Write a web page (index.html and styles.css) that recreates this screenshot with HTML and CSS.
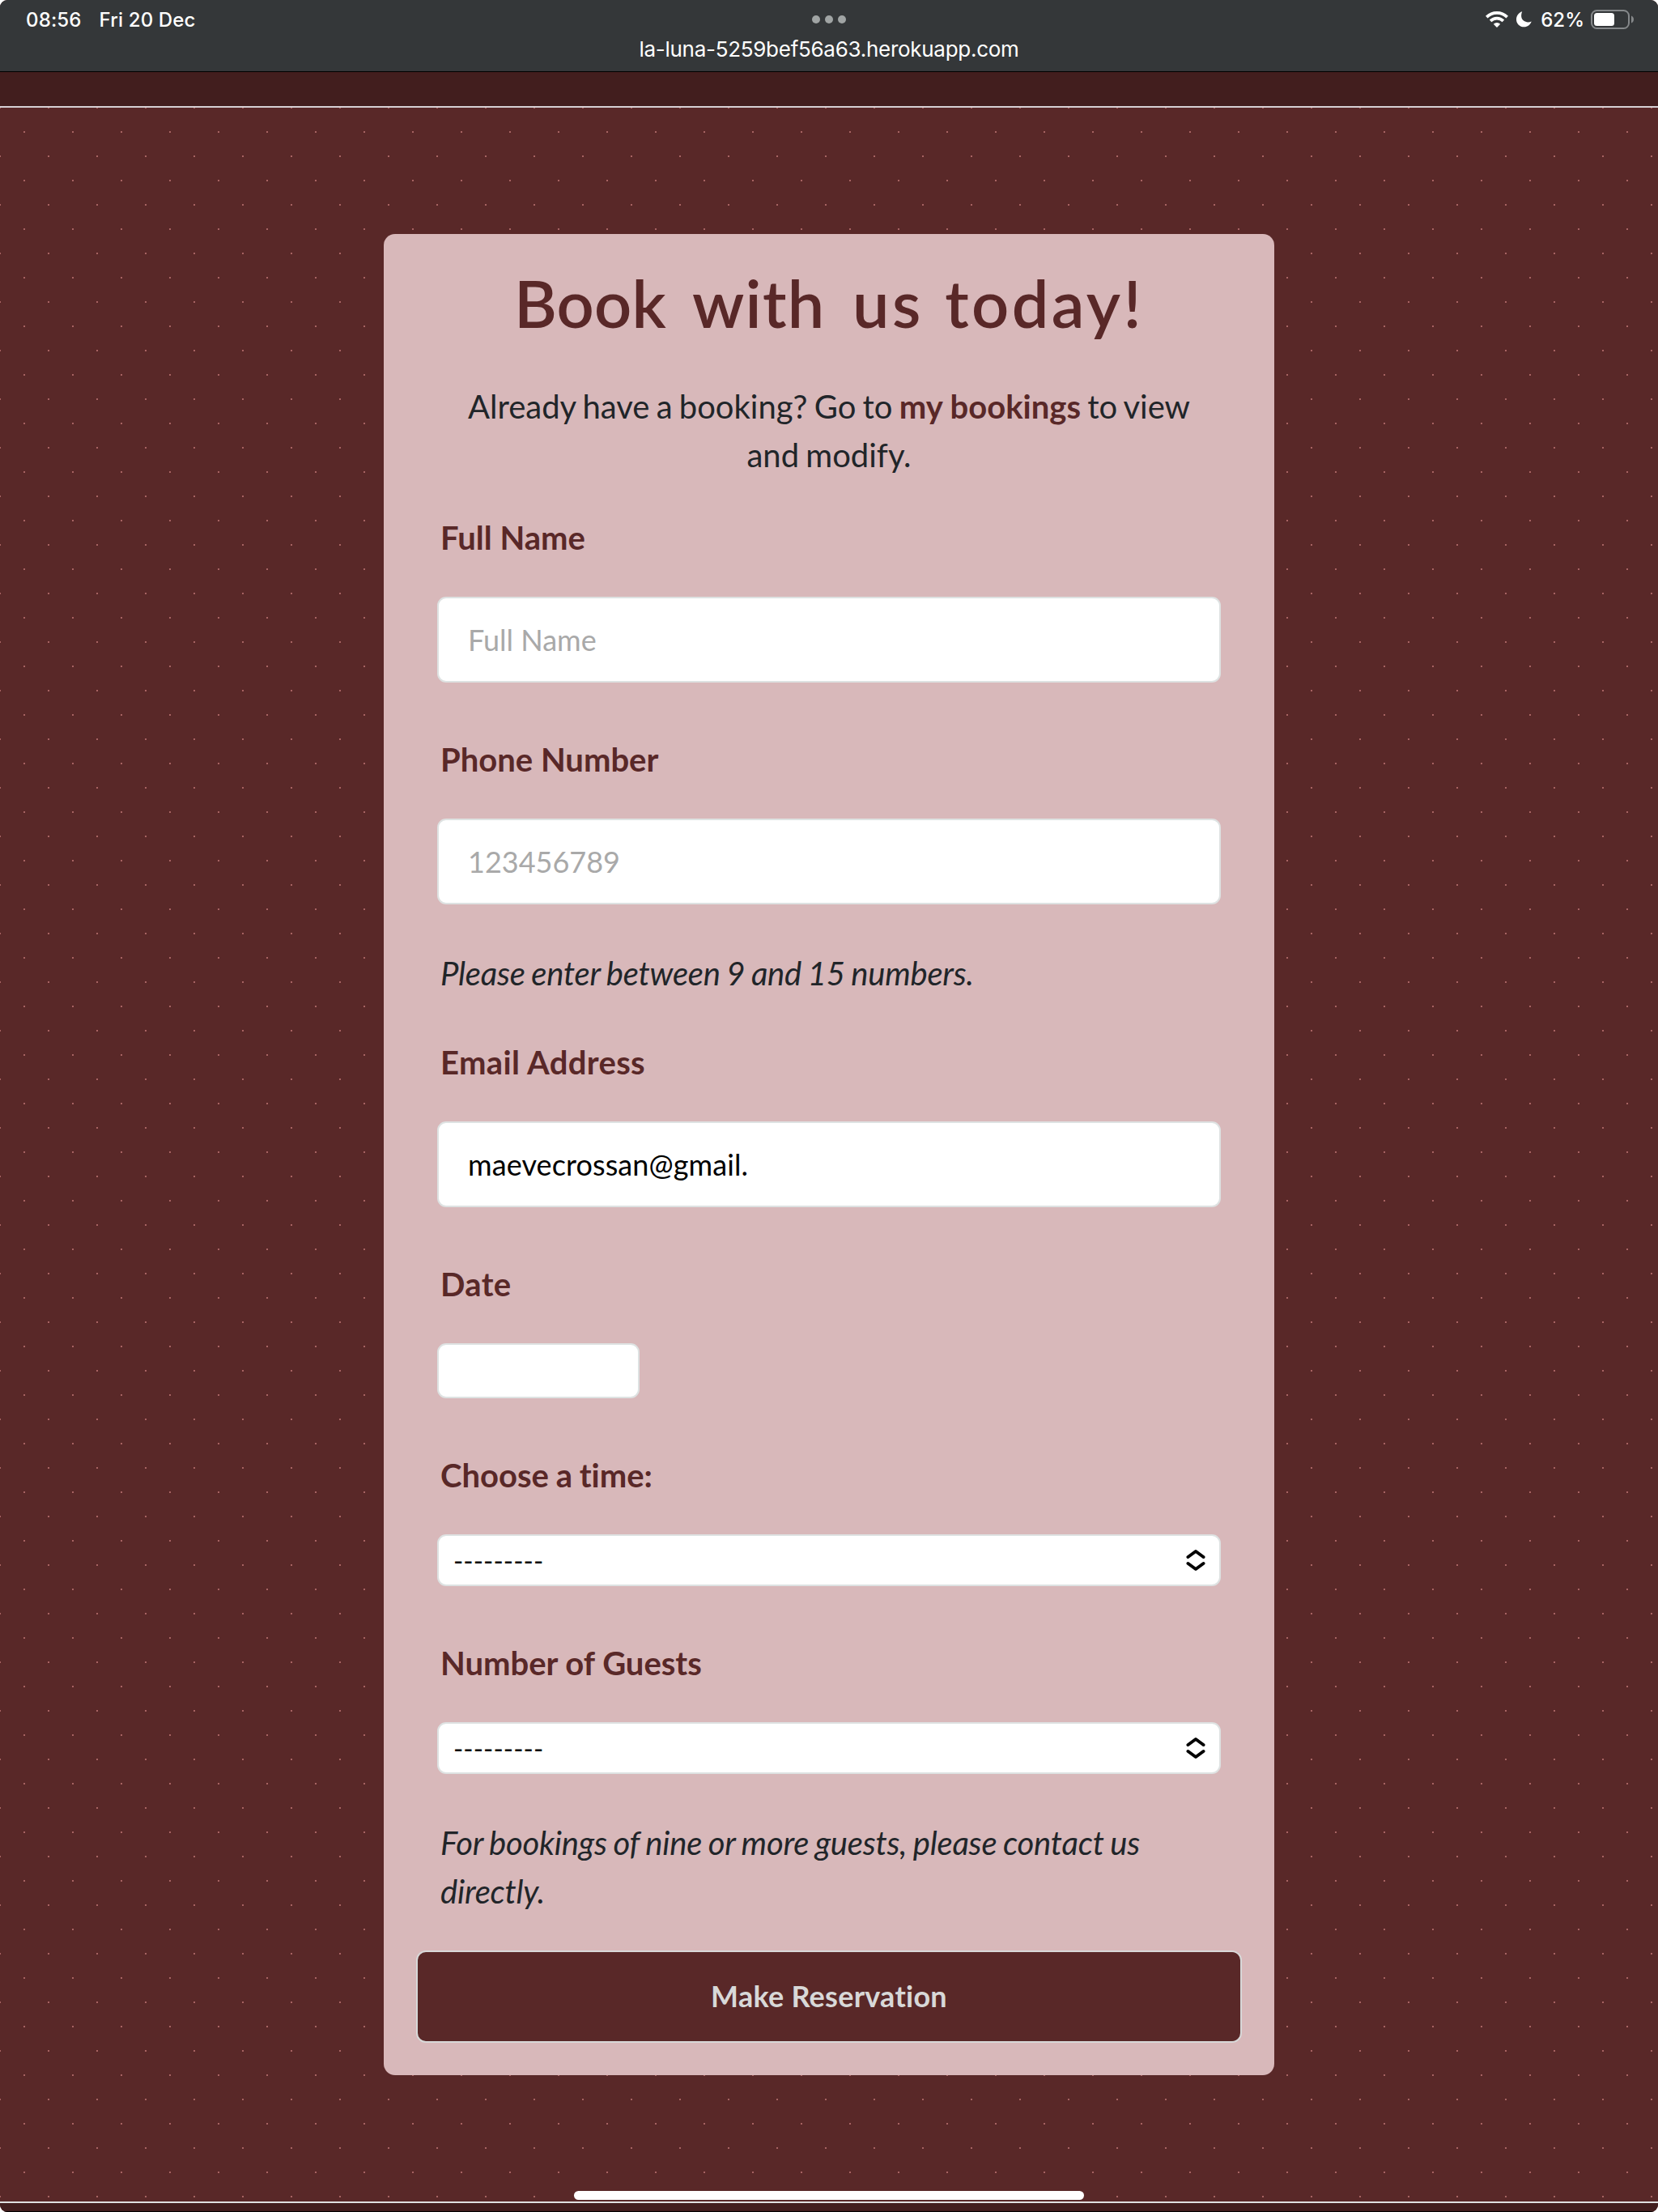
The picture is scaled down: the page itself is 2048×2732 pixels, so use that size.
FILE: index.html
```html
<!DOCTYPE html>
<html lang="en">
<head>
<meta charset="utf-8">
<title>La Luna - Book</title>
<link rel="stylesheet" href="styles.css">
</head>
<body>
<div class="screen">
  <header class="status">
    <div class="status-row">
      <div class="status-left"><span class="time">08:56</span><span class="day">Fri 20 Dec</span></div>
      <div class="dots"><i></i><i></i><i></i></div>
      <div class="status-right">
        <svg class="wifi" width="28" height="20" viewBox="0 0 28 20"><g fill="none" stroke="#fff" stroke-width="3.6"><path d="M1.3 7.1a18 18 0 0 1 25.4 0"/><path d="M6.1 11.9a11.2 11.2 0 0 1 15.8 0"/></g><path fill="#fff" d="M14 20l-4.2-4.3a6 6 0 0 1 8.4 0z"/></svg>
        <svg class="moon" width="19" height="20" viewBox="0 0 19 20"><path fill="#fff" d="M7.2.3C5.3 5 6 9.200 9 11.600c2.700 2.100 6.200 2.300 9.700.9C17.300 16.600 13.700 19.300 9.600 19.300 4.300 19.300 0 15.200 0 9.900 0 5.500 2.900 1.600 7.200.3z"/></svg>
        <span class="percent">62%</span>
        <svg class="battery" width="54" height="24" viewBox="0 0 54 24"><rect x="1" y="1" width="46" height="22" rx="6.500" fill="none" stroke="#85888a" stroke-width="2"/><rect x="4" y="4" width="25" height="16" rx="3.500" fill="#fff"/><path d="M50 7.500c4 1.500 4 7.500 0 9z" fill="#85888a"/></svg>
      </div>
    </div>
    <div class="url"><span>la-luna-5259bef56a63.herokuapp.com</span></div>
  </header>
  <div class="navbar"></div>
  <main class="page">
    <form class="card">
      <h1 class="title"><span class="narrow">Book</span> with <span class="wide">us today!</span></h1>
      <p class="intro">Already have a booking? Go to <a class="link">my bookings</a> to view<br>and modify.</p>
      <div class="field">
        <label class="label" for="name">Full Name</label>
        <input class="input" id="name" type="text" placeholder="Full Name">
      </div>
      <div class="field">
        <label class="label" for="phone">Phone Number</label>
        <input class="input" id="phone" type="text" placeholder="123456789">
        <p class="hint">Please enter between 9 and 15 numbers.</p>
      </div>
      <div class="field after-hint">
        <label class="label loose" for="email">Email Address</label>
        <input class="input email" id="email" type="text" value="maevecrossan@gmail.">
      </div>
      <div class="field">
        <label class="label loose" for="date">Date</label>
        <input class="input date" id="date" type="text">
      </div>
      <div class="field">
        <label class="label tight">Choose a time:</label>
        <div class="select"><span>---------</span>
          <svg width="24" height="28" viewBox="0 0 24 28"><g fill="none" stroke="#000" stroke-width="4" stroke-linecap="round" stroke-linejoin="round"><path d="M2.500 10L12 3l9.500 7M2.500 18l9.500 7 9.500-7"/></g></svg>
        </div>
      </div>
      <div class="field">
        <label class="label">Number of Guests</label>
        <div class="select"><span>---------</span>
          <svg width="24" height="28" viewBox="0 0 24 28"><g fill="none" stroke="#000" stroke-width="4" stroke-linecap="round" stroke-linejoin="round"><path d="M2.500 10L12 3l9.500 7M2.500 18l9.500 7 9.500-7"/></g></svg>
        </div>
        <p class="hint">For bookings of nine or more guests, please contact us<br>directly.</p>
      </div>
      <button class="submit" type="button">Make Reservation</button>
    </form>
  </main>
  <footer class="footer"></footer>
  <div class="home"></div>
</div>
</body>
</html>
```
FILE: styles.css
```css
* { box-sizing: border-box; margin: 0; padding: 0; }
body { background: #fff; font-family: Lato, sans-serif; font-variant-ligatures: none; }
.screen {
  position: relative; display: flex; flex-direction: column;
  width: 2048px; height: 2732px; overflow: hidden;
  border-radius: 9px; background: #592828;
}
.status {
  height: 89px; background: #343739; border-bottom: 1px solid #000;
  color: #fff; font-family: Inter, sans-serif;
}
.status-row {
  display: grid; grid-template-columns: 1fr auto 1fr; align-items: center;
  height: 48px; padding: 0 29px 0 32px;
  font-size: 24px; font-weight: 500;
}
.status-left { display: flex; gap: 22px; letter-spacing: 0.15px; }
.dots { display: flex; gap: 6px; margin-left: -3px; }
.dots i { width: 10px; height: 10px; border-radius: 50%; background: #a0a4a4; }
.status-right { display: flex; justify-content: flex-end; align-items: center; }
.moon { margin-left: 10px; }
.percent { margin-left: 11px; margin-right: 8px; }
.url { height: 40px; line-height: 25px; font-size: 26px; letter-spacing: -0.28px; text-align: center; }
.navbar { height: 44px; background: #421e1e; border-bottom: 2px solid #d6d0d4; }

/* two staggered grids of 2px dots */
.page {
  flex: 1; display: flex; justify-content: center; align-items: flex-start;
  padding-top: 156px;
  background:
    conic-gradient(from 90deg at 58px 58px, #a76362 90deg, transparent 0) -29px -29px / 60px 60px,
    conic-gradient(from 90deg at 58px 58px, #a76362 90deg, transparent 0) 1px 1px / 60px 60px;
}
.card {
  width: 1100px; height: 2274px; padding: 37px 40px 40px;
  background: #d8b8ba; border-radius: 14px; color: #212529;
  font-size: 40px; line-height: 60px;
}
.title {
  height: 96px; margin-bottom: 50px; text-align: center; white-space: nowrap;
  font-size: 81px; line-height: 96px; font-weight: 600; color: #592828;
  letter-spacing: 1.3px; word-spacing: 12px;
}
.narrow { letter-spacing: 0.3px; }
.wide { letter-spacing: 3.4px; word-spacing: 3px; }
.intro { text-align: center; word-spacing: -2px; }
.link { color: #592828; font-weight: 700; word-spacing: 0; }
.field { padding: 0 26px; margin-top: 65px; }
.intro + .field { margin-top: 42px; }
.field.after-hint { margin-top: 50px; }
.label { display: block; margin-left: 4px; margin-bottom: 43px; color: #592828; font-weight: 700; }
.label.loose { letter-spacing: 0.35px; }
.label.tight { word-spacing: -1px; }
.input, .select {
  display: flex; width: 968px; height: 106px; padding: 0 36px;
  border: 2px solid #dee2e2; border-radius: 11px; background: #fff;
  font-family: inherit; font-size: 36px; color: #000; outline: 0;
}
.input::placeholder { color: #a9a9a9; opacity: 1; }
.input.email { letter-spacing: 0.1px; }
.input.date { width: 250px; height: 68px; }
.select { height: 64px; padding: 0 17.500px 0 18px; align-items: center; justify-content: space-between; font-size: 33px; letter-spacing: 0.1px; }
.hint { margin: 55px 0 0 4px; font-style: italic; letter-spacing: -0.2px; word-spacing: -1.600px; white-space: nowrap; }
.submit {
  display: block; width: 1020px; height: 114px; margin-top: 43px; padding-bottom: 2px;
  border: 2px solid #d8d8d8; border-radius: 12px; background: #592828;
  color: #d8d8d8; font-family: inherit; font-size: 36px; font-weight: 700;
  font-variant-ligatures: none; letter-spacing: 0.25px;
}
.footer { height: 13px; background: #421e1e; border-top: 2px solid #dfdfdf; border-bottom: 1px solid #000; }
.home {
  position: absolute; left: 709px; top: 2706px; width: 630px; height: 11px;
  border-radius: 6px; background: #fff;
}
```
